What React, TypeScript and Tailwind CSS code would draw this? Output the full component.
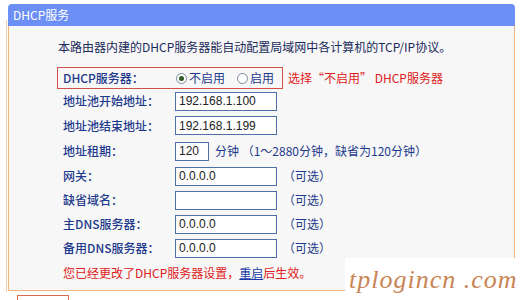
import React from "react";

const F = { fontFamily: '"Noto Sans CJK SC", "Noto Sans", sans-serif' };
const LAB = "text-[12px] leading-none text-[#1e3a8c] font-medium";

function Input({ w, value }: { w: string; value?: string }) {
  return (
    <div
      className={`${w} h-[19px] border border-[#4f6fa8] bg-white flex items-center pl-[3px] text-[12px] text-[#222]`}
      style={{ fontFamily: '"Liberation Sans", sans-serif' }}
    >
      {value}
    </div>
  );
}

function Row({ label, children, h = "h-[24px]" }: { label: string; children: React.ReactNode; h?: string }) {
  return (
    <div className={`flex items-center ${h} pl-[54px]`}>
      <div className={`w-[112px] ${LAB}`}>{label}</div>
      {children}
    </div>
  );
}

function Radio({ checked }: { checked?: boolean }) {
  return (
    <span className="inline-flex items-center justify-center w-[11px] h-[11px] rounded-full border border-[#7a8a9a] bg-white mr-[2px]">
      {checked && <span className="w-[5px] h-[5px] rounded-full bg-[#2f5a2a]" />}
    </span>
  );
}

export default function App() {
  return (
    <div className="w-[521px] h-[300px] bg-white relative overflow-hidden" style={F}>
      <div className="absolute left-[6px] top-[20px] h-[272px] w-[1px] bg-[#f6d2a8]" />
      <div className="pt-[4px] pl-[8px]">
        <div className="w-[507px]">
          <div className="h-[22px] bg-[#6c8ff5] rounded-t-[4px] flex items-center pl-[5px] text-white text-[12px]">
            DHCP服务
          </div>
          <div className="h-[265px] bg-[#f7f7f7] border-x border-b border-[#f2b47a] flex flex-col">
            <div className="h-[41px] flex items-center pl-[49px] text-[12px] text-[#1a2a5a]">
              本路由器内建的DHCP服务器能自动配置局域网中各计算机的TCP/IP协议。
            </div>
            <div className="flex items-center">
              <div className="ml-[48px] w-[226px] h-[22px] border border-[#d0504a] flex items-center pl-[5px]">
                <div className={`w-[113px] ${LAB}`}>DHCP服务器：</div>
                <label className="flex items-center text-[12px] text-[#1e3a8c]">
                  <Radio checked />
                  不启用
                </label>
                <label className="flex items-center text-[12px] text-[#1e3a8c] ml-[12px]">
                  <Radio />
                  启用
                </label>
              </div>
              <div className="ml-[5px] text-[12px] text-[#e02020]">选择“不启用” DHCP服务器</div>
            </div>
            <Row label="地址池开始地址：">
              <Input w="w-[102px]" value="192.168.1.100" />
            </Row>
            <Row label="地址池结束地址：" h="h-[25px]">
              <Input w="w-[102px]" value="192.168.1.199" />
            </Row>
            <Row label="地址租期：" h="h-[26px]">
              <Input w="w-[34px]" value="120" />
              <span className="ml-[6px] text-[12px] text-[#1e3a8c]">分钟 （1～2880分钟，缺省为120分钟）</span>
            </Row>
            <Row label="网关：">
              <Input w="w-[102px]" value="0.0.0.0" />
              <span className="ml-[6px] text-[12px] text-[#1e3a8c]">（可选）</span>
            </Row>
            <Row label="缺省域名：">
              <Input w="w-[102px]" />
              <span className="ml-[6px] text-[12px] text-[#1e3a8c]">（可选）</span>
            </Row>
            <Row label="主DNS服务器：">
              <Input w="w-[102px]" value="0.0.0.0" />
              <span className="ml-[6px] text-[12px] text-[#1e3a8c]">（可选）</span>
            </Row>
            <Row label="备用DNS服务器：">
              <Input w="w-[102px]" value="0.0.0.0" />
              <span className="ml-[6px] text-[12px] text-[#1e3a8c]">（可选）</span>
            </Row>
            <div className="h-[26px] flex items-center pl-[54px] text-[12px] text-[#e02020]">
              您已经更改了DHCP服务器设置，
              <span className="text-[#1a3aa8] underline">重启</span>
              后生效。
            </div>
          </div>
          <div className="mt-[4px] ml-[9px] w-[52px] h-[10px] border border-[#d86a50] bg-white" />
        </div>
      </div>
      <div className="absolute left-[345px] top-[258px] w-[176px] h-[42px] bg-white flex items-center pl-[4px]">
        <span
          className="whitespace-nowrap text-[26px] italic text-[#c98455] tracking-[1px]"
          style={{ fontFamily: '"Liberation Serif", serif' }}
        >
          tplogincn .com
        </span>
      </div>
    </div>
  );
}
